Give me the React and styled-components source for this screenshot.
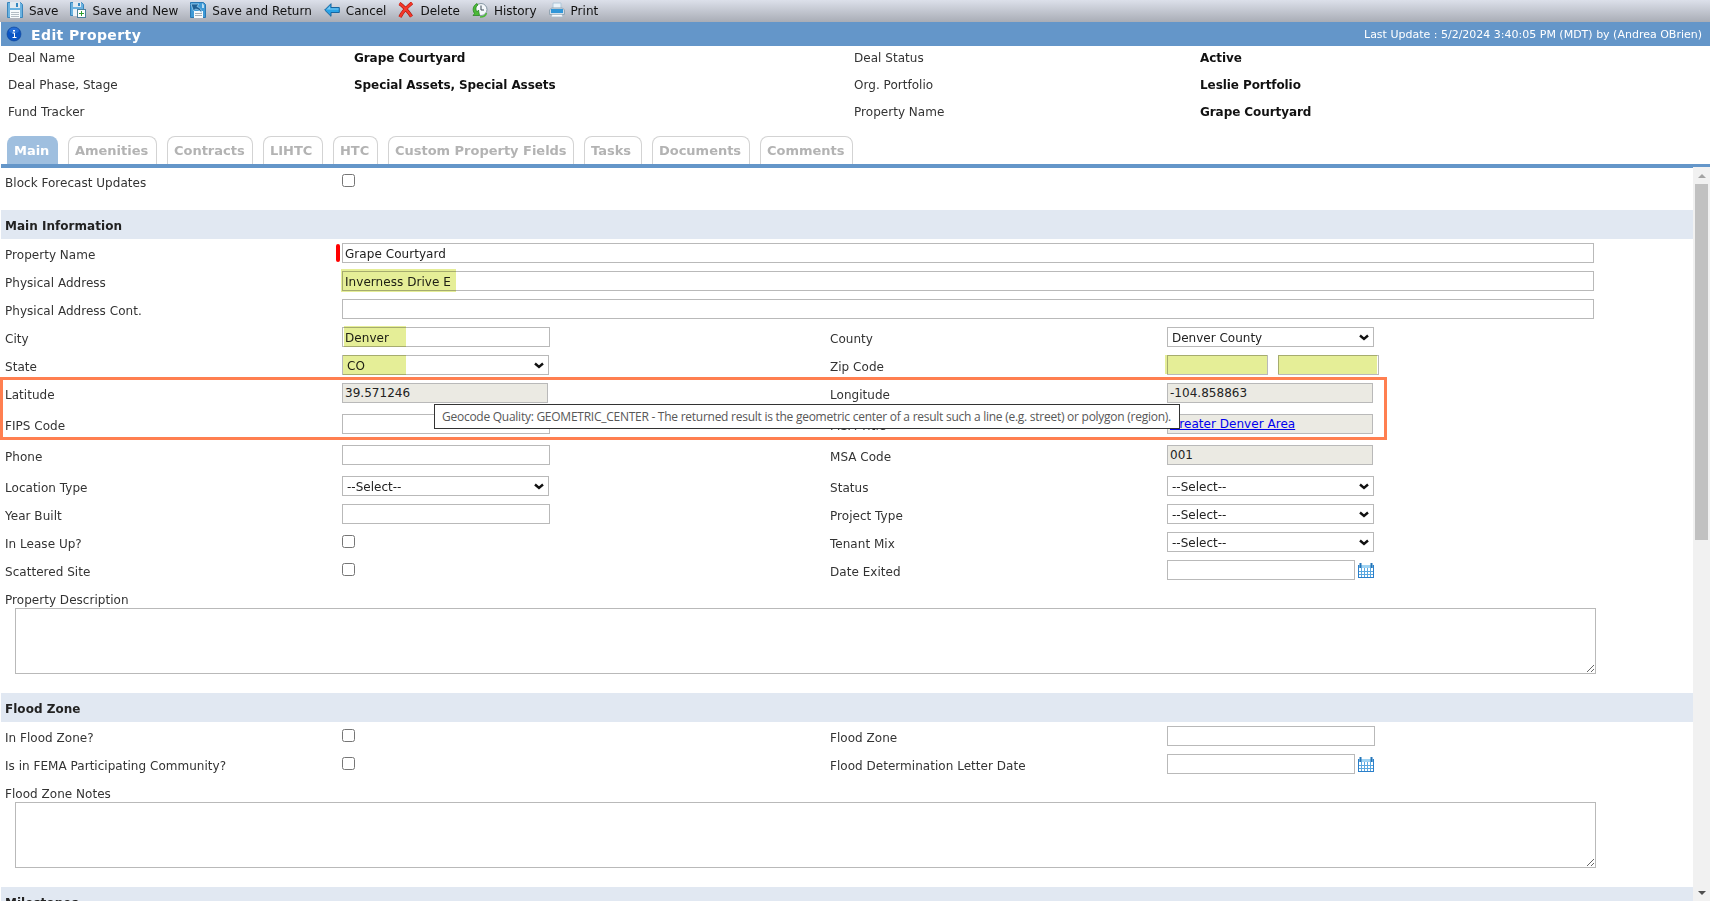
import styled, { createGlobalStyle } from "styled-components";

const SaveIcon = () => (
    <svg width="16" height="16" viewBox="0 0 16 16">
        <path d="M0.5 0.5h13l2 2v13h-15z" fill="#6bb2e0" stroke="#3a86bd" />
        <rect x="3" y="0" width="10" height="6" fill="#e3eaf0" />
        <rect x="9" y="1" width="2" height="4" fill="#3787c0" />
        <rect x="3" y="8" width="10" height="8" fill="#f7fafc" />
        <path d="M4 10.5h8M4 12.5h8M4 14.5h8" stroke="#b3bcc4" />
    </svg>
);

const SaveNewIcon = () => (
    <svg width="16" height="16" viewBox="0 0 16 16">
        <path d="M0.5 0.5h11l2 2v11h-13z" fill="#6bb2e0" stroke="#3a86bd" />
        <rect x="3" y="0" width="8" height="5" fill="#e3eaf0" />
        <rect x="8" y="1" width="2" height="3" fill="#3787c0" />
        <rect x="3" y="7" width="8" height="7" fill="#eef4f8" />
        <rect x="7.5" y="7.5" width="8" height="8" fill="#fff" stroke="#4b7f9c" />
        <path d="M11.5 9v5M9 11.5h5" stroke="#2f9e2f" />
    </svg>
);

const SaveReturnIcon = () => (
    <svg width="16" height="16" viewBox="0 0 16 16">
        <path d="M0.5 0.5h13l2 2v13h-15z" fill="#3f9ad6" stroke="#2a78b3" />
        <rect x="4" y="9" width="9" height="7" fill="#f7fafc" />
        <path d="M5 11.5h7M5 13.5h7" stroke="#a3adb5" />
        <path
            d="M1 2h8L7 4.5c3 1 4.5 3 4.5 6C10 8.5 8 7.5 5.5 7L3.5 9z"
            fill="#1f5f93"
            stroke="#a9d8f5"
            strokeWidth="0.7"
        />
        <path d="M12 1v5h2V3z" fill="#b8dcf2" />
    </svg>
);

const CancelIcon = () => (
    <svg width="16" height="16" viewBox="0 0 16 16">
        <path d="M0.7 8L7 1.7v3.8h8.3v5H7v3.8z" fill="#2aa3e6" stroke="#17659f" />
        <path d="M2.5 7.5L6 4v2.5h8.5v1z" fill="#7cc9f2" />
    </svg>
);

const DeleteIcon = () => (
    <svg width="16" height="16" viewBox="0 0 16 16">
        <path
            d="M1.5 1.5C4 3 10 9 13.5 14.5M14 1C9 5 4.5 10 2 15"
            fill="none"
            stroke="#a61208"
            strokeWidth="3.4"
        />
        <path
            d="M1.5 1.5C4 3 10 9 13.5 14.5M14 1C9 5 4.5 10 2 15"
            fill="none"
            stroke="#f5382a"
            strokeWidth="2.3"
        />
    </svg>
);

const HistoryIcon = () => (
    <svg width="16" height="16" viewBox="0 0 16 16">
        <circle cx="9" cy="7.5" r="6" fill="#f4f8fb" stroke="#8496a3" />
        <path d="M9 3.5v4.5h3" fill="none" stroke="#3b4955" />
        <path
            d="M5 1.5C1 3.5 0 8 2.5 11.5L1 13.5h6.5L6.5 8 5 10C3.5 7.5 3.5 4.5 6 3z"
            fill="#4cba38"
            stroke="#217f1c"
            strokeWidth="0.7"
        />
        <path d="M8 15c4 0 6-2 6.5-4" fill="none" stroke="#4cba38" strokeWidth="1.5" />
    </svg>
);

const PrintIcon = () => (
    <svg width="16" height="16" viewBox="0 0 16 16">
        <path d="M4 1h8v7H4z" fill="#eaf3fa" stroke="#b0c7d8" />
        <path d="M0.5 8l2-2h11l2 2v4.5h-15z" fill="#d3dee7" stroke="#93a5b3" />
        <rect x="2" y="7" width="12" height="4" fill="#3196d8" />
        <path d="M3 12.5h10l1 2.5H2z" fill="#f8fbfd" stroke="#a7b9c6" strokeWidth="0.8" />
    </svg>
);

const InfoIcon = () => (
    <svg width="16" height="16" viewBox="0 0 16 16">
        <circle cx="8" cy="8" r="7" fill="#0b55c4" stroke="#0d3f92" strokeWidth="0.6" />
        <ellipse cx="8" cy="4.5" rx="5" ry="3" fill="#3f86e6" opacity="0.5" />
        <rect x="7" y="4" width="2" height="1.5" fill="#fff" />
        <path d="M6.5 7h2v4M6.5 11.5h4" fill="none" stroke="#fff" />
    </svg>
);

const CalendarIcon = () => (
    <svg width="16" height="15" viewBox="0 0 16 15">
        <rect x="0" y="2" width="16" height="13" fill="#2b7fca" />
        <rect x="1" y="2" width="14" height="3" fill="#9fd3f3" />
        <rect x="1" y="5" width="14" height="9" fill="#fff" />
        <path d="M1 8.5h14M1 11.5h14M3.5 5v9M6.5 5v9M9.5 5v9M12.5 5v9" stroke="#5aa8e0" />
        <path d="M2.5 0v5M13.5 0v5" stroke="#2475b8" strokeWidth="2" />
    </svg>
);

const actions = [
    { label: "Save", icon: <SaveIcon /> },
    { label: "Save and New", icon: <SaveNewIcon /> },
    { label: "Save and Return", icon: <SaveReturnIcon /> },
    { label: "Cancel", icon: <CancelIcon /> },
    { label: "Delete", icon: <DeleteIcon /> },
    { label: "History", icon: <HistoryIcon /> },
    { label: "Print", icon: <PrintIcon /> },
];

const summary = [
    ["Deal Name", "Grape Courtyard", "Deal Status", "Active"],
    ["Deal Phase, Stage", "Special Assets, Special Assets", "Org. Portfolio", "Leslie Portfolio"],
    ["Fund Tracker", "", "Property Name", "Grape Courtyard"],
];

const tabs = [
    { label: "Main", width: 51, active: true },
    { label: "Amenities", width: 89 },
    { label: "Contracts", width: 86 },
    { label: "LIHTC", width: 60 },
    { label: "HTC", width: 45 },
    { label: "Custom Property Fields", width: 186 },
    { label: "Tasks", width: 58 },
    { label: "Documents", width: 98 },
    { label: "Comments", width: 93 },
];

const GlobalStyle = createGlobalStyle`
    * {
        box-sizing: border-box;
    }
    body {
        margin: 0;
        overflow: hidden;
        background: #fff;
    }
`;
const Page = styled.div`
    display: flex;
    flex-direction: column;
    width: 1710px;
    height: 901px;
    overflow: hidden;
    color: #333;
    font-family: "DejaVu Sans", Verdana, sans-serif;
    font-size: 12px;
    line-height: 16px;
    letter-spacing: 0.03px;
    white-space: nowrap;
`;
const Toolbar = styled.div`
    display: flex;
    align-items: flex-start;
    gap: 12px;
    flex: none;
    height: 22px;
    padding: 2px 0 0 7px;
    background: linear-gradient(#dce0ea, #a9adb6);
    color: #111;
    letter-spacing: 0;
`;
const Action = styled.div`
    display: flex;
    gap: 6px;
    span {
        padding-top: 1px;
    }
`;
const TitleBar = styled.div`
    display: flex;
    align-items: center;
    flex: none;
    height: 24px;
    margin-left: 1px;
    padding: 0 8px 0 5px;
    background: #6496c9;
    color: #fff;
`;
const Title = styled.div`
    margin: 1px 0 0 9px;
    font-size: 14px;
    font-weight: bold;
    letter-spacing: 0.4px;
`;
const Updated = styled.div`
    margin: 1px 0 0 auto;
    font-size: 11px;
    letter-spacing: 0;
`;
const Summary = styled.div`
    flex: none;
    height: 90px;
    padding-left: 8px;
`;
const SummaryRow = styled.div`
    display: grid;
    grid-template-columns: 346px 500px 346px 1fr;
    align-items: center;
    height: 27px;
    padding-bottom: 4px;
    b {
        color: #111;
        letter-spacing: -0.08px;
    }
`;
const Tabs = styled.div`
    display: flex;
    gap: 10px;
    flex: none;
    height: 32px;
    margin-left: 1px;
    padding-left: 6px;
    border-bottom: 4px solid #6496c9;
`;
const Tab = styled.div`
    width: ${(props) => props.$width}px;
    height: 28px;
    padding: ${(props) => (props.$active ? "7px 0 0 7px" : "6px 0 0 6px")};
    border: ${(props) => (props.$active ? "none" : "1px solid #d3d3d3")};
    border-bottom: none;
    border-radius: 8px 8px 0 0;
    background: ${(props) => (props.$active ? "#9fbfdf" : "#fff")};
    color: ${(props) => (props.$active ? "#fff" : "#b3b3b3")};
    font-size: 13px;
    font-weight: bold;
    letter-spacing: -0.02px;
`;
const Body = styled.div`
    display: flex;
    flex: 1;
    min-height: 0;
    margin-top: -1px;
`;
const Form = styled.div`
    width: 1693px;
    overflow: hidden;
`;
const SectionTitle = styled.div`
    height: 29px;
    margin: ${(props) => props.$gap}px 0 0 1px;
    padding: 8px 0 0 4px;
    background: #e1e8f2;
    color: #222;
    font-weight: bold;
`;
const FormRow = styled.div`
    display: grid;
    grid-template-columns: 337px 488px 337px 1fr;
    height: ${(props) => (props.$tall ? 31 : 28)}px;
    padding-left: 5px;
`;
const Label = styled.div`
    padding-top: 8px;
`;
const Field = styled.div`
    position: relative;
    display: flex;
    align-items: flex-start;
    padding-top: 4px;
`;
const Input = styled.input`
    flex: none;
    width: ${(props) => props.$width}px;
    height: 20px;
    margin: 0 0 0 ${(props) => props.$gap || 0}px;
    padding: 1px 2px 0;
    border: 1px solid #b9b9b9;
    outline: none;
    background: #fff;
    color: #222;
    font: inherit;
    letter-spacing: 0.05px;
`;
const SelectWrapper = styled.div`
    display: grid;
    grid-template-columns: 1fr 14px;
    align-items: center;
    width: 207px;
    height: 20px;
    border: 1px solid #b9b9b9;
    background: #fff;
`;
const SelectBox = styled.select`
    grid-area: 1 / 1 / 2 / 3;
    height: 18px;
    margin: 0;
    padding: 1px 4px 0;
    border: none;
    border-radius: 0;
    outline: none;
    background: transparent;
    color: #222;
    font: inherit;
    appearance: none;
`;
const Chevron = styled.svg`
    grid-area: 1 / 2 / 2 / 3;
    width: 10px;
    height: 8px;
    pointer-events: none;
`;
const ReadOnly = styled.div`
    width: 206px;
    height: 20px;
    padding: 1px 2px 0;
    border: 1px solid #b9b9b9;
    background: #ebeae3;
    color: #222;
`;
const Link = styled.a`
    color: #0000ee;
`;
const Checkbox = styled.input.attrs({ type: "checkbox" })`
    width: 13px;
    height: 13px;
    margin: 3px 0 0;
`;
const Required = styled.div`
    flex: none;
    width: 4px;
    height: 18px;
    margin: 1px 2px 0 -6px;
    border-radius: 2px;
    background: #f00;
`;
const CalendarButton = styled.span`
    display: flex;
    margin: 3px 0 0 3px;
`;
/* marker pen over a field value */
const Highlight = styled.div`
    position: absolute;
    left: ${(props) => props.$left}px;
    top: ${(props) => props.$top}px;
    width: ${(props) => props.$width}px;
    height: ${(props) => props.$height}px;
    background: #e5ee97;
    mix-blend-mode: multiply;
`;
const Callout = styled.div`
    position: relative;
`;
const CalloutFrame = styled.div`
    position: absolute;
    left: 0;
    top: -2px;
    width: 1387px;
    height: 63px;
    border: 3px solid #ff7f50;
`;
const Tooltip = styled.div`
    position: absolute;
    left: 434px;
    top: 25px;
    width: 746px;
    height: 25px;
    padding: 4px 7px;
    border: 1px solid #333;
    background: #fff;
    color: #575757;
    font-family: "Open Sans", "Segoe UI", sans-serif;
    font-size: 12px;
    letter-spacing: -0.26px;
`;
const NotesLabel = styled.div`
    height: 24px;
    padding: 8px 0 0 5px;
`;
const Notes = styled.textarea`
    display: block;
    width: 1581px;
    height: 66px;
    margin: 0 0 0 15px;
    border: 1px solid #b9b9b9;
    outline: none;
`;
const Scrollbar = styled.div`
    display: flex;
    flex-direction: column;
    align-items: center;
    width: 17px;
    background: #f1f1f1;
`;
const Arrow = styled.div`
    width: 0;
    height: 0;
    margin: ${(props) => (props.$up ? "7px 0 6px" : "auto 0 6px")};
    border: solid transparent;
    border-width: ${(props) => (props.$up ? "0 4px 4px" : "4px 4px 0")};
    border-bottom-color: #a3a3a3;
    border-top-color: #505050;
`;
const Thumb = styled.div`
    width: 13px;
    height: 356px;
    background: #c1c1c1;
`;

const Select = ({ value }) => (
    <SelectWrapper>
        <SelectBox defaultValue={value}>
            <option>{value}</option>
        </SelectBox>
        <Chevron viewBox="0 0 10 8">
            <path d="M1 2.5l4 3.5L9 2.5" fill="none" stroke="#111" strokeWidth="2.4" />
        </Chevron>
    </SelectWrapper>
);

const DateField = () => (
    <>
        <Input $width={188} />
        <CalendarButton>
            <CalendarIcon />
        </CalendarButton>
    </>
);

const Row = ({ label, children, label2, field2, tall }) => (
    <FormRow $tall={tall}>
        <Label>{label}</Label>
        <Field>{children}</Field>
        {label2 && <Label>{label2}</Label>}
        {label2 && <Field>{field2}</Field>}
    </FormRow>
);

const App = () => {
    return (
        <Page>
            <GlobalStyle />
            <Toolbar>
                {actions.map((el) => (
                    <Action key={el.label}>
                        {el.icon}
                        <span>{el.label}</span>
                    </Action>
                ))}
            </Toolbar>
            <TitleBar>
                <InfoIcon />
                <Title>Edit Property</Title>
                <Updated>Last Update : 5/2/2024 3:40:05 PM (MDT) by (Andrea OBrien)</Updated>
            </TitleBar>
            <Summary>
                {summary.map((row) => (
                    <SummaryRow key={row[0]}>
                        <span>{row[0]}</span>
                        <b>{row[1]}</b>
                        <span>{row[2]}</span>
                        <b>{row[3]}</b>
                    </SummaryRow>
                ))}
            </Summary>
            <Tabs>
                {tabs.map((el) => (
                    <Tab key={el.label} $width={el.width} $active={el.active}>
                        {el.label}
                    </Tab>
                ))}
            </Tabs>
            <Body>
                <Form>
                    <Row label="Block Forecast Updates">
                        <Checkbox />
                    </Row>
                    <SectionTitle $gap={15}>Main Information</SectionTitle>
                    <Row label="Property Name">
                        <Required />
                        <Input $width={1252} defaultValue="Grape Courtyard" />
                    </Row>
                    <Row label="Physical Address">
                        <Input $width={1252} defaultValue="Inverness Drive E" />
                        <Highlight $left={-1} $top={2} $width={115} $height={23} />
                    </Row>
                    <Row label="Physical Address Cont.">
                        <Input $width={1252} />
                    </Row>
                    <Row label="City" label2="County" field2={<Select value="Denver County" />}>
                        <Input $width={208} defaultValue="Denver" />
                        <Highlight $left={2} $top={3} $width={62} $height={21} />
                    </Row>
                    <Row
                        label="State"
                        label2="Zip Code"
                        field2={
                            <>
                                <Input $width={101} />
                                <Input $width={101} $gap={10} />
                                <Highlight $left={-2} $top={4} $width={102} $height={19} />
                                <Highlight $left={111} $top={4} $width={99} $height={19} />
                            </>
                        }
                    >
                        <Select value="CO" />
                        <Highlight $left={1} $top={4} $width={63} $height={20} />
                    </Row>
                    <Callout>
                        <Row
                            tall
                            label="Latitude"
                            label2="Longitude"
                            field2={<ReadOnly>-104.858863</ReadOnly>}
                        >
                            <ReadOnly>39.571246</ReadOnly>
                        </Row>
                        <Row
                            tall
                            label="FIPS Code"
                            label2="MSA Title"
                            field2={
                                <ReadOnly>
                                    <Link href="#">Greater Denver Area</Link>
                                </ReadOnly>
                            }
                        >
                            <Input $width={208} />
                        </Row>
                        <CalloutFrame />
                        <Tooltip>
                            Geocode Quality: GEOMETRIC_CENTER - The returned result is the
                            geometric center of a result such a line (e.g. street) or polygon
                            (region).
                        </Tooltip>
                    </Callout>
                    <Row tall label="Phone" label2="MSA Code" field2={<ReadOnly>001</ReadOnly>}>
                        <Input $width={208} />
                    </Row>
                    <Row
                        label="Location Type"
                        label2="Status"
                        field2={<Select value="--Select--" />}
                    >
                        <Select value="--Select--" />
                    </Row>
                    <Row
                        label="Year Built"
                        label2="Project Type"
                        field2={<Select value="--Select--" />}
                    >
                        <Input $width={208} />
                    </Row>
                    <Row
                        label="In Lease Up?"
                        label2="Tenant Mix"
                        field2={<Select value="--Select--" />}
                    >
                        <Checkbox />
                    </Row>
                    <Row label="Scattered Site" label2="Date Exited" field2={<DateField />}>
                        <Checkbox />
                    </Row>
                    <NotesLabel>Property Description</NotesLabel>
                    <Notes />

                    <SectionTitle $gap={19}>Flood Zone</SectionTitle>
                    <Row
                        label="In Flood Zone?"
                        label2="Flood Zone"
                        field2={<Input $width={208} />}
                    >
                        <Checkbox />
                    </Row>
                    <Row
                        label="Is in FEMA Participating Community?"
                        label2="Flood Determination Letter Date"
                        field2={<DateField />}
                    >
                        <Checkbox />
                    </Row>
                    <NotesLabel>Flood Zone Notes</NotesLabel>
                    <Notes />

                    <SectionTitle $gap={19}>Milestones</SectionTitle>
                </Form>
                <Scrollbar>
                    <Arrow $up />
                    <Thumb />
                    <Arrow />
                </Scrollbar>
            </Body>
        </Page>
    );
};
export default App;
